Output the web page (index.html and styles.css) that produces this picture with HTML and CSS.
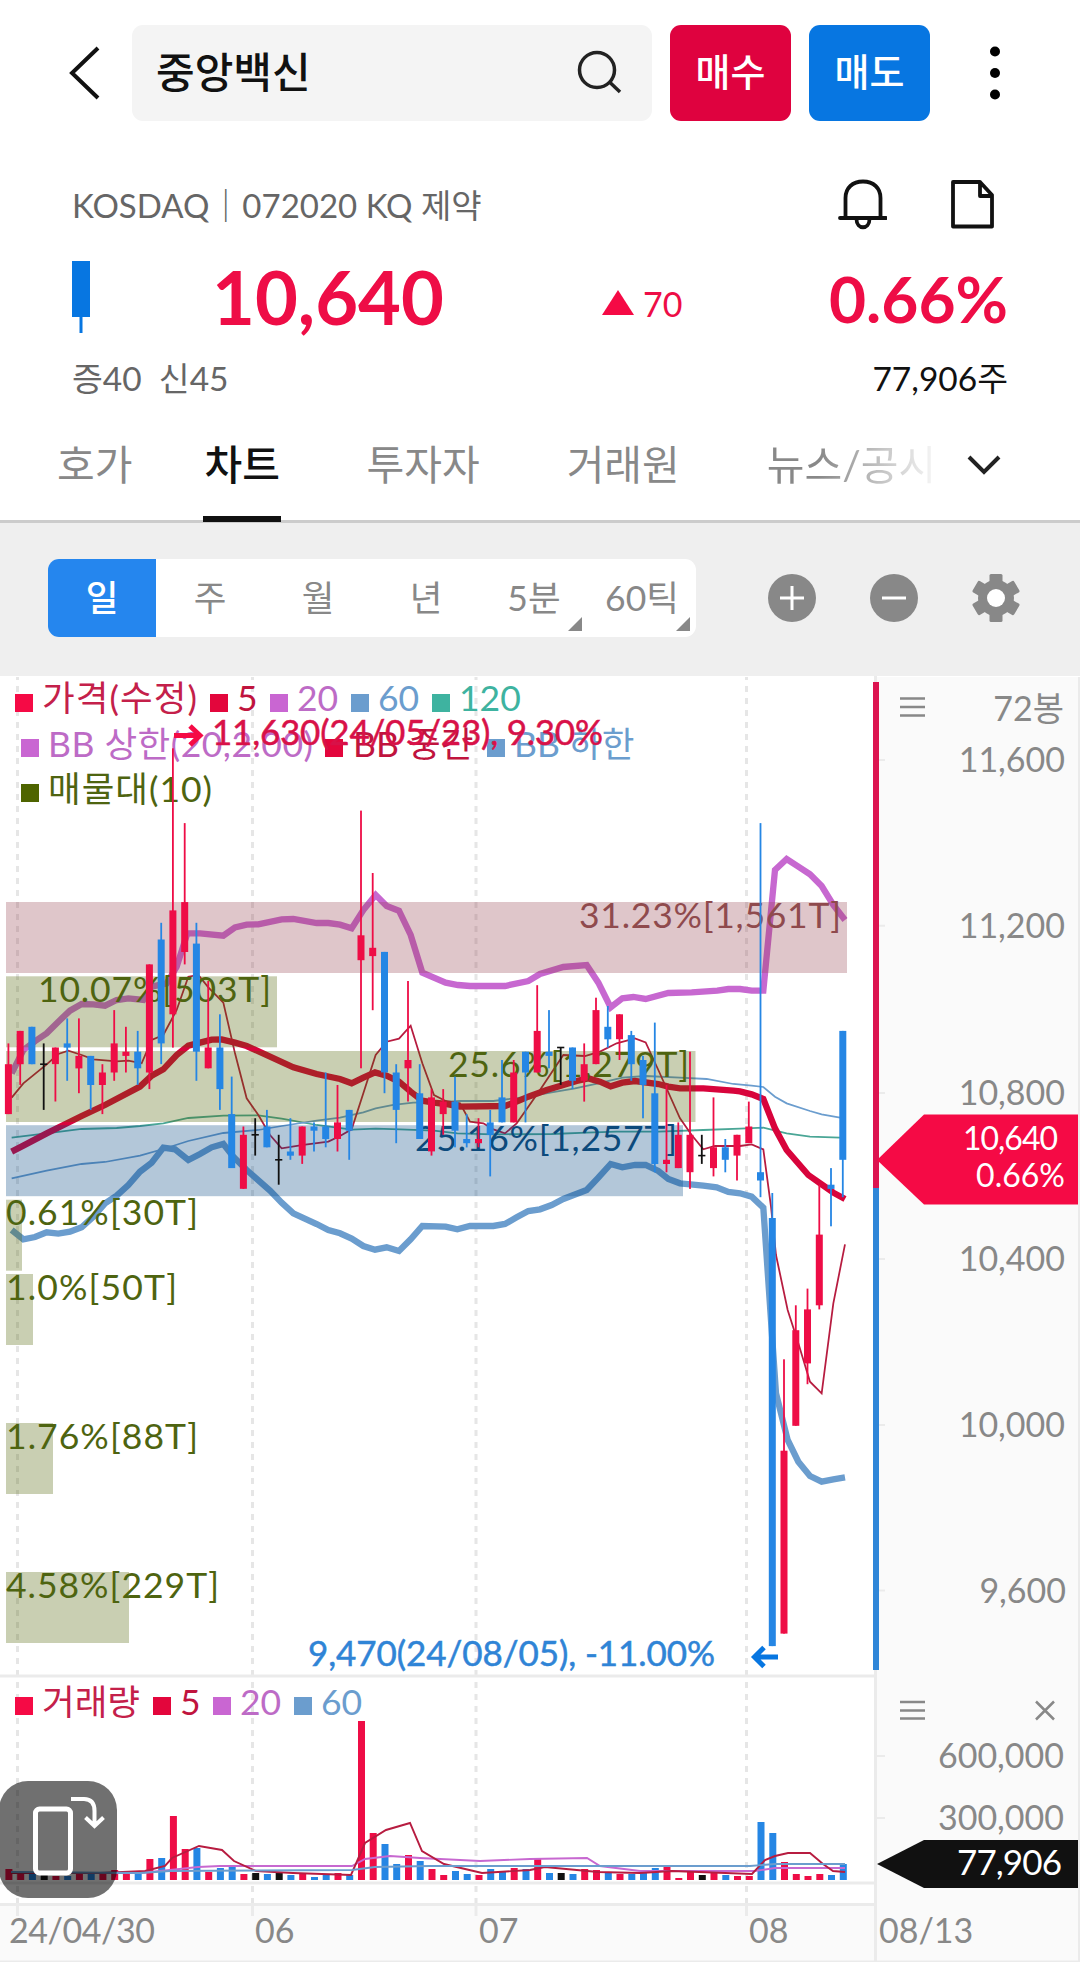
FILE: index.html
```html
<!DOCTYPE html>
<html lang="ko">
<head>
  <meta charset="UTF-8">
  <meta name="viewport" content="width=device-width, initial-scale=1.0">
  <title>중앙백신 차트</title>
  <link rel="stylesheet" href="styles.css">
</head>
<body>
  <header class="topbar">
    <svg class="back" viewBox="0 0 34 56"><path d="M31 3 L5 28 L31 53"/></svg>
    <div class="search">
      <span>중앙백신</span>
      <svg viewBox="0 0 48 48"><circle cx="21" cy="21" r="17.500"/><path d="M33.500 33 L44 43"/></svg>
    </div>
    <button class="trade buy">매수</button>
    <button class="trade sell">매도</button>
    <svg class="more" viewBox="0 0 12 54"><circle cx="6" cy="5.500" r="5"/><circle cx="6" cy="27" r="5"/><circle cx="6" cy="48.500" r="5"/></svg>
  </header>

  <section class="quote">
    <div class="row info">
      <span>KOSDAQ｜072020 KQ 제약</span>
      <div class="info-icons">
        <svg width="50" height="52" viewBox="0 0 50 52"><path d="M8.500 39 V20 C8.500 10 15.500 3.500 26 3.500 S43.500 10 43.500 20 V39 M3 40 H49 M19.500 41 C19.500 52 32.500 52 32.500 41"/></svg>
        <svg width="46" height="52" viewBox="0 0 46 52"><path d="M4 4 H31 L43 17 V48.500 H4 Z M31 4 V18 H43"/></svg>
      </div>
    </div>
    <div class="row price">
      <svg class="mini" width="20" height="74" viewBox="0 0 20 74"><path d="M0 0H18V56H0Z M7.500 56H10.500V72H7.500Z"/></svg>
      <strong class="now">10,640</strong>
      <span class="diff"><svg width="32" height="26" viewBox="0 0 32 26"><path d="M16 0 L32 25 H0 Z"/></svg>70</span>
      <strong class="rate">0.66%</strong>
    </div>
    <div class="row sub">
      <span class="margin">증40&nbsp; 신45</span>
      <span>77,906주</span>
    </div>
  </section>

  <nav class="tabs">
    <a>호가</a>
    <a class="on">차트</a>
    <a>투자자</a>
    <a>거래원</a>
    <a class="fade">뉴스/공시</a>
    <svg width="36" height="22" viewBox="0 0 36 22"><path d="M3 3 L18 18 L33 3"/></svg>
  </nav>

  <div class="toolbar">
    <div class="periods">
      <span class="on">일</span>
      <span>주</span>
      <span>월</span>
      <span>년</span>
      <span class="sel">5분</span>
      <span class="sel">60틱</span>
    </div>
    <div class="tools">
      <svg width="48" height="48" viewBox="0 0 48 48"><circle cx="24" cy="24" r="24"/><path class="sign" d="M12 24H36M24 12V36"/></svg>
      <svg width="48" height="48" viewBox="0 0 48 48"><circle cx="24" cy="24" r="24"/><path class="sign" d="M12 24H36"/></svg>
      <svg width="48" height="48" viewBox="1 1 48 48">
        <circle cx="25" cy="25" r="18"/>
        <rect x="18.500" y="1" width="13" height="48" rx="1.500"/>
        <rect x="18.500" y="1" width="13" height="48" rx="1.500" transform="rotate(60 25 25)"/>
        <rect x="18.500" y="1" width="13" height="48" rx="1.500" transform="rotate(120 25 25)"/>
        <circle class="hole" cx="25" cy="25" r="9"/>
      </svg>
    </div>
  </div>

  <svg class="chart" width="1080" height="1286" viewBox="0 676 1080 1286">
    <rect class="axis-bg" x="876" y="677" width="204" height="1285"/>
    <rect class="axis-bg" x="0" y="1905" width="876" height="57"/>
    <path class="grid" d="M17.500 677V1905M252.500 677V1905M476 677V1905M746.500 677V1905"/>
    <path class="rule" d="M0 1676H875M0 1883H875M0 1904.500H875M875.500 676V1962M17.500 1905V1916M252.500 1905V1916M476 1905V1916M746.500 1905V1916"/>
    <path class="rule thin" d="M876 760H885M876 925.700H885M876 1093H885M876 1259H885M876 1425H885M876 1590.500H885M876 1756H885M876 1818H885M1079 677V1962M0 1961.500H1080"/>

    <g class="legend">
      <g class="c-price"><rect x="15" y="694" width="18" height="18"/><text x="42" y="711" textLength="155">가격(수정)</text></g>
      <g class="c-ma5"><rect x="210" y="694" width="18" height="18"/><text x="237" y="711">5</text></g>
      <g class="c-ma20"><rect x="270" y="694" width="18" height="18"/><text x="297" y="711">20</text></g>
      <g class="c-ma60"><rect x="351" y="694" width="18" height="18"/><text x="378" y="711">60</text></g>
      <g class="c-ma120"><rect x="432" y="694" width="18" height="18"/><text x="459" y="711">120</text></g>
      <g class="c-ma20"><rect x="21" y="739" width="18" height="18"/><text x="48" y="757" textLength="265">BB 상한(20,2.00)</text></g>
      <g class="c-ma5"><rect x="325" y="739" width="18" height="18"/><text x="353" y="757">BB 중간</text></g>
      <g class="c-ma60"><rect x="487" y="739" width="18" height="18"/><text x="514" y="757">BB 하한</text></g>
      <g class="c-vol"><rect x="21" y="784" width="18" height="18"/><text x="48" y="802" textLength="164">매물대(10)</text></g>
      <g class="c-price"><rect x="15" y="1697" width="18" height="18"/><text x="42" y="1715">거래량</text></g>
      <g class="c-ma5"><rect x="153" y="1697" width="18" height="18"/><text x="180" y="1715">5</text></g>
      <g class="c-ma20"><rect x="213" y="1697" width="18" height="18"/><text x="240" y="1715">20</text></g>
      <g class="c-ma60"><rect x="294" y="1697" width="18" height="18"/><text x="321" y="1715">60</text></g>
    </g>

    <g id="lines" transform="translate(0 780) scale(.33333)"></g>
    <g id="profile"></g>
    <g id="candles"></g>
    <g id="volume"></g>
    <g id="vlines"></g>

    <g class="peak">
      <path d="M174 735.500H199M190 726L200 735.500L190 745"/>
      <text x="212" y="745" textLength="391">11,630(24/05/23), 9.30%</text>
    </g>
    <g class="trough">
      <path d="M778 1657H755M764 1647.500L754.500 1657L764 1666.500"/>
      <text x="308" y="1666" textLength="407">9,470(24/08/05), -11.00%</text>
    </g>

    <path class="range up" d="M876 682V1188"/>
    <path class="range down" d="M876 1188V1670"/>

    <g class="axis">
      <text x="1064" y="721">72봉</text>
      <text x="1065" y="772">11,600</text>
      <text x="1065" y="938">11,200</text>
      <text x="1065" y="1105">10,800</text>
      <text x="1065" y="1271">10,400</text>
      <text x="1065" y="1437">10,000</text>
      <text x="1066" y="1603">9,600</text>
      <text x="1064" y="1768">600,000</text>
      <text x="1064" y="1830">300,000</text>
    </g>
    <g class="dates">
      <text x="9" y="1943" textLength="146">24/04/30</text>
      <text x="255" y="1943">06</text>
      <text x="479" y="1943">07</text>
      <text x="749" y="1943">08</text>
      <text x="879" y="1943">08/13</text>
    </g>
    <path class="ctl" d="M900 698.500H925M900 707H925M900 715.500H925M900 1702H925M900 1710.500H925M900 1718.500H925M1036 1701.500L1054 1719.500M1054 1701.500L1036 1719.500"/>

    <g class="tag">
      <path d="M877 1160L924 1114.500H1078V1204.500H924Z"/>
      <text x="1058" y="1150" textLength="95">10,640</text>
      <text x="1065" y="1187">0.66%</text>
    </g>
    <g class="tag dark">
      <path d="M877 1864L924 1840H1078V1888H924Z"/>
      <text x="1062" y="1875" textLength="105">77,906</text>
    </g>

    <g class="rotate">
      <rect class="box" x="-1" y="1781" width="118" height="117" rx="29"/>
      <rect class="phone" x="35.500" y="1809" width="35" height="64" rx="4"/>
      <path d="M71 1799H84Q94.500 1799 94.500 1811V1825M85.500 1817.500L94.500 1826L103.500 1817.500"/>
    </g>
  </svg>

  <script src="chart.js"></script>
</body>
</html>
```
FILE: styles.css
```css
* {
  box-sizing: border-box;
}
body {
  margin: 0;
  width: 1080px;
  height: 1962px;
  overflow: hidden;
  background: #fff;
  color: #111;
  font-family: Lato, "Noto Sans CJK KR", sans-serif;
}
svg {
  display: block;
}
.topbar {
  display: flex;
  align-items: center;
  height: 146px;
  padding: 0 79px 0 67px;
}
.back {
  width: 34px;
  height: 56px;
  margin-right: 31px;
  fill: none;
  stroke: #111;
  stroke-width: 4;
}
.search {
  display: flex;
  align-items: center;
  justify-content: space-between;
  width: 520px;
  height: 96px;
  padding: 0 28px 0 24px;
  border-radius: 11px;
  background: #f4f4f4;
  font-size: 42px;
  font-weight: 500;
}
.search span {
  margin-top: -8px;
}
.search svg {
  width: 48px;
  height: 48px;
  fill: none;
  stroke: #222;
  stroke-width: 3.5;
}
.trade {
  width: 121px;
  height: 96px;
  margin-left: 18px;
  padding: 0 0 8px;
  border: 0;
  border-radius: 11px;
  color: #fff;
  font: 500 38px Lato, "Noto Sans CJK KR", sans-serif;
}
.buy {
  background: #df023f;
}
.sell {
  background: #0776e1;
}
.more {
  width: 12px;
  height: 54px;
  margin-left: auto;
}
.quote {
  padding: 28px 72px 0 72px;
}
.row {
  display: flex;
  align-items: center;
  justify-content: space-between;
}
.info {
  height: 60px;
  color: #666;
  font-size: 33px;
}
.info-icons {
  display: flex;
  gap: 62px;
  margin-right: 13px;
  fill: none;
  stroke: #111;
  stroke-width: 3.8;
  stroke-linecap: round;
  stroke-linejoin: round;
}
.price {
  height: 112px;
  padding-top: 12px;
  color: #ee0d46;
}
.mini {
  margin-top: 4px;
  fill: #0776e1;
}
.now {
  width: 350px;
  margin-left: 120px;
  font-size: 74px;
}
.diff {
  display: flex;
  align-items: center;
  gap: 9px;
  margin-top: 14px;
  margin-left: 40px;
  font-size: 34px;
}
.diff svg {
  fill: #f50a45;
}
.rate {
  width: 180px;
  margin-top: 4px;
  margin-left: auto;
  font-size: 64px;
  text-align: right;
}
.sub {
  height: 60px;
  font-size: 33.5px;
}
.margin {
  color: #666;
}
.tabs {
  display: flex;
  align-items: center;
  height: 117px;
  padding: 0 78px 0 57px;
  border-bottom: 3px solid #ccc;
  color: #888;
  font-size: 41px;
}
.tabs a {
  display: flex;
  align-items: center;
  height: 117px;
  margin-right: 87px;
  padding-bottom: 2px;
}
.tabs a:first-child {
  margin-right: 71px;
}
.tabs .on {
  width: 78px;
  margin-right: 85px;
  border-bottom: 6px solid #111;
  color: #111;
  font-weight: 500;
  padding: 4px 0 0 1px;
}
.tabs .fade {
  margin-right: 0;
  background: linear-gradient(90deg, #888 30%, #fff 105%);
  background-clip: text;
  -webkit-background-clip: text;
  color: transparent;
}
.tabs svg {
  margin-top: 4px;
  margin-left: auto;
  fill: none;
  stroke: #222;
  stroke-width: 4;
}
.toolbar {
  display: flex;
  align-items: center;
  justify-content: space-between;
  height: 153px;
  padding: 0 60px 3px 48px;
  background: #efefef;
}
.periods {
  display: flex;
  width: 648px;
  height: 78px;
  overflow: hidden;
  border-radius: 11px;
  background: #fff;
  color: #888;
  font-size: 35.5px;
}
.periods span {
  position: relative;
  display: flex;
  flex: 1;
  align-items: center;
  justify-content: center;
  padding-bottom: 6px;
}
.periods .on {
  background: #2586ee;
  color: #fff;
  font-weight: 500;
}
.sel::after {
  content: "";
  position: absolute;
  right: 6px;
  bottom: 6px;
  border-left: 14px solid transparent;
  border-bottom: 14px solid #888;
}
.tools {
  display: flex;
  align-items: center;
  gap: 54px;
  fill: #888;
}
.sign {
  fill: none;
  stroke: #fff;
  stroke-width: 3;
}
.hole {
  fill: #fff;
}

/* chart */
.axis-bg { fill: #fafafa; }
.grid { fill: none; stroke: #e6e6e6; stroke-width: 3; stroke-dasharray: 6 6; stroke-dashoffset: 3; }
.rule { fill: none; stroke: #ebebeb; stroke-width: 3; }
.rule.thin { stroke-width: 2; }
.legend { font-size: 35.5px; }
.c-price { fill: #f50a45; }
.c-ma5 { fill: #e3063c; }
.c-ma20 { fill: #c966d2; }
.c-ma60 { fill: #6b9dce; }
.c-ma120 { fill: #3eb3a0; }
.c-vol { fill: #4e6400; }
.c-price text { fill: #c4204a; }
.c-ma5 text { fill: #c0143e; }
.c-ma20 text { fill: #bd6bc6; }
.c-vol text { fill: #4e6410; }
.line { fill: none; stroke-width: 1.9; }
#lines .line { stroke-width: 5.3; }
#lines .thick { stroke-width: 19; }
.line.ma5 { stroke: #b71c40; }
.line.mid { stroke: #d8043c; }
.line.ma20 { stroke: #c768d0; }
.line.ma60 { stroke: #6b9dce; }
.line.ma120 { stroke: #4aa696; }
#profile { font-size: 35.5px; }
.r { fill: #ee0d46; }
.b { fill: #2586e4; }
.k { fill: #111; }
.peak, .trough { font-size: 35px; fill: #d81148; }
.peak path, .trough path { fill: none; stroke: #f50a45; stroke-width: 5; }
.trough { fill: #2f84d6; }
.peak text { stroke: #d81148; stroke-width: .5; }
.trough text { stroke: #2f84d6; stroke-width: .5; }
.trough path { stroke: #0776e1; }
.range { stroke-width: 6; }
.range.up { stroke: #dc1450; }
.range.down { stroke: #2f86d8; }
.axis { fill: #888; font-size: 34px; text-anchor: end; }
.dates { fill: #888; font-size: 34px; }
.ctl { fill: none; stroke: #888; stroke-width: 2.5; }
.tag { fill: #f50a45; font-size: 32px; text-anchor: end; }
.tag text { fill: #fff; }
.dark { fill: #111; font-size: 35px; }
.rotate { fill: none; stroke: #fff; stroke-width: 4; }
.rotate .box { fill: rgba(0, 0, 0, .56); stroke: none; }
.rotate .phone { stroke-width: 5; }
```
FILE: chart.js
```javascript
const STEP = 11.752;
const X0 = 8.4;

// color, high, body top, body bottom, low, volume bar height
const candles = [
  ['r',10920,10870,10750,10750,11],['r',10950,10950,10870,10820,7],['b',10960,10960,10870,10870,7],
  ['k',10920,10870,10870,10760,5],['r',10910,10910,10870,10780,4],['b',10980,10920,10910,10830,4],
  ['r',10980,10890,10860,10800,6],['b',10890,10890,10820,10760,6],['r',10870,10850,10820,10750,7],
  ['r',11000,10920,10850,10830,10],['r',10960,10900,10890,10850,6],['b',10950,10900,10860,10820,6],
  ['r',11110,11110,10850,10810,21],['b',11210,11170,10920,10870,22],['r',11630,11240,10990,10910,64],
  ['r',11450,11260,11140,11110,31],['b',11210,11160,10900,10830,32],['r',11070,10910,10860,10860,8],
  ['b',10990,10910,10810,10760,12],['b',10840,10750,10620,10620,13],['r',10720,10700,10570,10570,6],
  ['k',10740,10700,10700,10650,7],['b',10760,10720,10670,10670,6],['k',10700,10640,10640,10580,7],
  ['b',10740,10660,10650,10640,5],['r',10720,10720,10650,10630,6],['b',10730,10720,10710,10660,3],
  ['b',10850,10720,10690,10670,5],['r',10820,10730,10690,10660,7],['b',10760,10760,10710,10640,5],
  ['r',11480,11180,11120,10860,159],['r',11330,11150,11130,11000,47],['b',11140,11140,10850,10800,36],
  ['b',10870,10850,10760,10680,16],['r',11070,10880,10860,10780,25],['b',10870,10800,10690,10690,19],
  ['r',10810,10790,10660,10650,11],['r',10810,10780,10750,10700,5],['b',10840,10780,10710,10670,9],
  ['b',10750,10690,10680,10670,6],['r',10740,10690,10680,10670,5],['b',10760,10730,10700,10600,11],
  ['b',10880,10790,10730,10730,9],['r',10880,10850,10730,10730,12],['b',10900,10900,10850,10730,11],
  ['r',11060,10950,10850,10850,21],['b',11000,10900,10890,10860,7],['k',10910,10910,10910,10820,7],
  ['b',10910,10910,10830,10810,6],['r',10920,10870,10830,10780,11],['r',11030,11000,10870,10870,10],
  ['b',11010,10960,10930,10910,7],['r',10990,10990,10930,10880,6],['b',10950,10940,10870,10830,6],
  ['b',10890,10880,10820,10740,7],['b',10970,10800,10630,10610,12],['r',10820,10640,10630,10610,13],
  ['r',10730,10700,10620,10620,2],['r',10900,10700,10610,10570,8],['k',10700,10650,10650,10630,5],
  ['r',10790,10670,10620,10600,8],['b',10690,10670,10640,10610,5],['r',10700,10700,10650,10590,4],
  ['r',10780,10720,10680,10680,4],['b',11450,10610,10590,10550,58],['b',10560,10500,9470,9470,47],
  ['r',10160,9940,9500,9500,18],['r',10290,10230,10000,10000,6],['r',10330,10280,10150,10100,4],
  ['r',10580,10460,10290,10280,6],['b',10620,10580,10570,10480,5],['b',10950,10950,10640,10550,16]
];

const lines = {
  'ma120': '35,1073 175,1056 245,1047 350,1044 420,1038 490,1030 565,1014 670,1007 775,1006 845,1016 950,1035 1055,1049 1127,1046 1200,1048 1302,1052 1372,1060 1480,1063 1655,1062 1760,1058 1850,1055 1975,1055 2110,1050 2220,1046 2290,1043 2360,1060 2430,1070 2520,1073',
  'ma60': '35,1195 140,1172 245,1152 315,1146 420,1127 490,1107 565,1083 670,1059 775,1050 845,1038 950,1022 1020,1013 1090,997 1127,985 1180,975 1240,968 1337,966 1380,963 1480,963 1585,950 1655,937 1725,925 1795,910 1867,893 1937,888 2040,893 2120,897 2200,912 2255,917 2290,921 2325,950 2360,970 2430,993 2465,1003 2520,1013',
  'ma5': '35,953 70,910 140,853 175,822 205,812 245,825 280,838 350,844 385,842 425,850 455,780 490,765 530,690 565,590 595,585 625,622 670,668 705,820 740,955 775,1005 810,1065 845,1105 910,1095 985,1085 1020,1068 1055,1048 1090,940 1127,825 1160,785 1197,776 1232,737 1267,850 1302,945 1337,963 1380,970 1410,1025 1450,1030 1480,1048 1515,1060 1550,1030 1585,980 1620,930 1690,825 1755,828 1800,815 1850,790 1905,775 1937,787 1975,870 2040,1015 2075,1065 2110,1108 2145,1098 2220,1098 2255,1093 2290,1108 2313,1280 2328,1425 2363,1590 2395,1690 2430,1805 2465,1840 2500,1570 2535,1393',
  'ma20 thick': '35,880 70,810 106,783 140,760 175,725 210,692 245,672 280,673 315,677 350,660 385,655 430,660 455,620 500,610 530,560 562,460 600,460 670,467 705,442 740,434 775,433 845,418 880,417 950,429 985,429 1020,434 1055,445 1090,390 1127,345 1160,378 1197,392 1232,465 1267,578 1337,608 1374,615 1410,618 1515,618 1585,603 1620,582 1690,561 1760,555 1795,608 1832,682 1867,655 1900,651 1937,657 2005,639 2075,637 2152,632 2185,627 2220,627 2255,632 2290,632 2325,270 2360,237 2395,260 2430,283 2465,318 2500,375 2535,420',
  'ma60 thick': '35,1350 70,1378 105,1371 140,1357 175,1361 210,1355 245,1342 280,1310 315,1270 350,1247 385,1215 420,1175 455,1148 490,1103 525,1108 565,1140 600,1122 635,1102 670,1092 700,1130 740,1170 810,1232 845,1268 880,1300 950,1332 985,1350 1020,1360 1055,1376 1090,1398 1125,1409 1160,1402 1197,1413 1232,1378 1267,1338 1337,1340 1372,1348 1410,1338 1480,1338 1515,1332 1550,1312 1585,1293 1620,1288 1655,1275 1690,1257 1760,1230 1795,1193 1832,1152 1867,1162 1905,1155 1937,1155 1975,1173 2005,1197 2040,1210 2110,1217 2150,1222 2185,1236 2220,1240 2255,1250 2290,1283 2328,1840 2363,1980 2395,2045 2430,2088 2465,2105 2500,2098 2535,2092',
  'mid thick': '35,1115 70,1097 140,1060 245,1008 315,975 420,920 455,887 490,868 530,825 565,797 600,788 635,779 665,778 705,788 740,798 880,862 950,882 1020,897 1055,910 1090,893 1125,877 1160,887 1197,905 1232,935 1267,962 1302,968 1337,972 1380,980 1515,978 1550,965 1585,950 1640,930 1690,915 1730,903 1765,895 1800,905 1832,919 1867,908 1905,903 1975,912 2005,920 2040,925 2110,925 2200,932 2220,934 2255,943 2290,957 2325,1045 2360,1110 2425,1185 2465,1213 2500,1238 2535,1257'
};

const vlines = {
  'ma20': '11,1873 140,1873 170,1870 198,1867 220,1866 352,1866 365,1859 390,1856 420,1858 480,1861 530,1859 587,1858 600,1866 640,1871 755,1871 775,1868 845,1868',
  'ma5': '11,1873 100,1873 145,1871 165,1866 172,1858 199,1846 222,1850 234,1861 256,1871 293,1873 351,1875 365,1843 386,1830 410,1823 422,1851 444,1864 482,1873 530,1870 545,1867 598,1872 640,1873 672,1871 752,1874 765,1860 775,1856 788,1853 810,1853 823,1864 833,1871 845,1872',
  'ma60': '11,1872 140,1873 170,1871 352,1870 375,1867 430,1866 750,1866 775,1864 845,1864'
};

// y, width, bar color, text color, text x, text width, label
const GREEN = 'rgba(75,95,0,.3)';
const profile = [
  [902, 841, 'rgba(148,65,78,.3)', '#8f4a4d', 579, 262, '31.23%[1,561T]'],
  [976.3, 271, GREEN, '#4e6410', 38, 233, '10.07%[503T]'],
  [1051, 689.5, GREEN, '#4e6410', 448, 241, '25.6%[1,279T]'],
  [1125.2, 677, 'rgba(2,71,128,.3)', '#0c4a7c', 415, 262, '25.16%[1,257T]'],
  [1199.7, 16, GREEN, '#4e6410', 6, 192, '0.61%[30T]'],
  [1274, 27, GREEN, '#4e6410', 6, 171, '1.0%[50T]'],
  [1423, 47, GREEN, '#4e6410', 6, 192, '1.76%[88T]'],
  [1572, 123, GREEN, '#4e6410', 6, 213, '4.58%[229T]']
];

function y(price) {
  return 927 + (11200 - price) * 0.41567;
}

function rect(cls, x, top, w, h) {
  return `<rect class="${cls}" x="${x.toFixed(1)}" y="${top.toFixed(1)}" width="${w}" height="${h.toFixed(1)}"/>`;
}

function drawLines(id, data) {
  document.getElementById(id).innerHTML = Object.keys(data)
    .map(k => `<polyline class="line ${k}" points="${data[k]}"/>`).join('');
}

let candleHtml = '';
let volumeHtml = '';
candles.forEach(([c, high, top, bottom, low, vol], i) => {
  const x = X0 + i * STEP;
  candleHtml += rect(c, x - 0.9, y(high), 1.8, y(low) - y(high));
  if (top === bottom) candleHtml += rect(c, x - 3.6, y(top) - 0.8, 7.2, 1.6);
  else candleHtml += rect(c, x - 3.5, y(top), 7, y(bottom) - y(top));
  volumeHtml += rect(c, x - 3, 1880 - vol, 7, vol);
});
document.getElementById('candles').innerHTML = candleHtml;
document.getElementById('volume').innerHTML = volumeHtml;

document.getElementById('profile').innerHTML = profile.map(([top, w, bg, color, tx, tw, label]) =>
  `<rect x="6" y="${top}" width="${w}" height="71" fill="${bg}"/>` +
  `<text x="${tx}" y="${top + 25.5}" fill="${color}" textLength="${tw}">${label}</text>`).join('');

drawLines('lines', lines);
drawLines('vlines', vlines);
```
